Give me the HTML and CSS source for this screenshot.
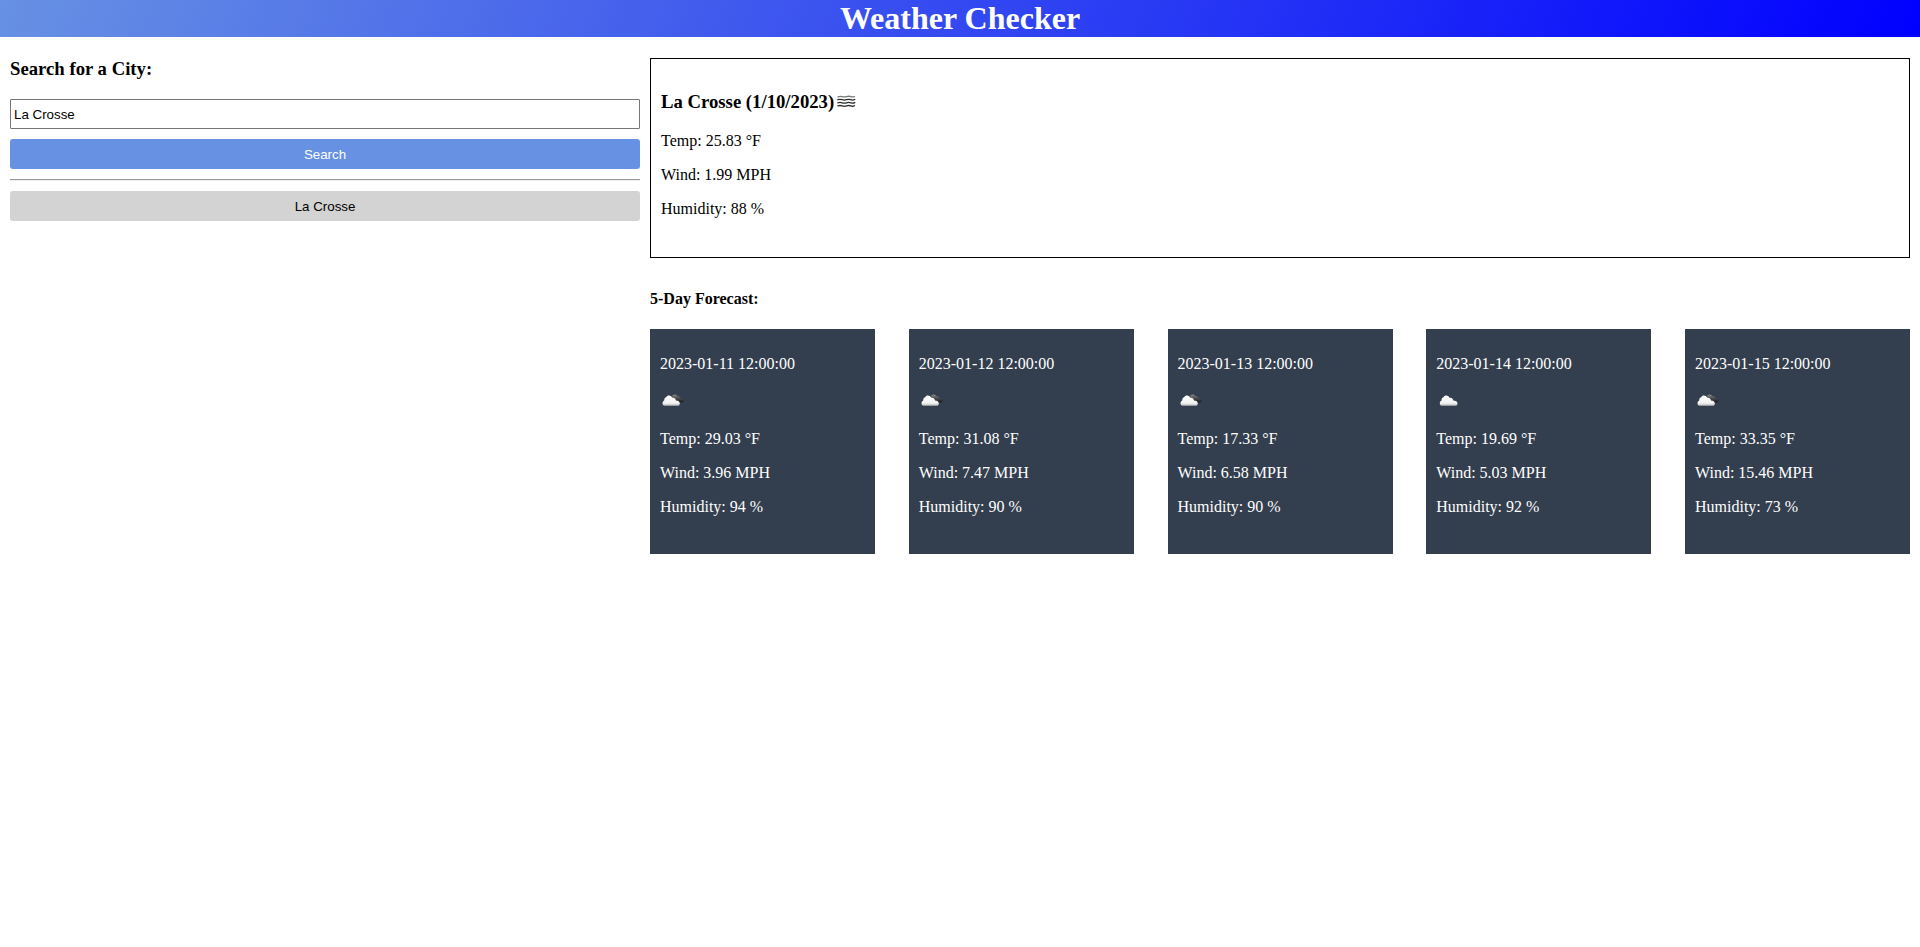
FILE: index.html
```html
<!DOCTYPE html>
<html lang="en">
<head>
  <meta charset="UTF-8">
  <meta name="viewport" content="width=device-width, initial-scale=1">
  <title>Weather Checker</title>
  <link rel="stylesheet" href="styles.css">
</head>
<body>
  <svg class="sprite" aria-hidden="true">
    <defs>
      <linearGradient id="white-cloud" x1="0" y1="0" x2="0" y2="1">
        <stop offset="0" stop-color="#ffffff"/>
        <stop offset="0.75" stop-color="#f2f2f2"/>
        <stop offset="1" stop-color="#b5b5b5"/>
      </linearGradient>
      <linearGradient id="dark-cloud" x1="0" y1="0" x2="0" y2="1">
        <stop offset="0" stop-color="#888888"/>
        <stop offset="0.5" stop-color="#484848"/>
        <stop offset="1" stop-color="#1c1c1c"/>
      </linearGradient>
    </defs>
    <symbol id="cloud" viewBox="0 0 25 25">
      <path fill="url(#white-cloud)" d="M6.500 16.800C4.800 16.800 3.800 15.800 3.800 14.400C3.800 12.800 4.500 11.800 5.500 11.400C5.500 9.200 6.500 8.400 7.500 8.200C8 6.900 9 6.400 10.200 6.400C12 6.400 13 7.400 13.600 8.700C15.600 8.300 17 9.600 17.300 11.500C19.600 11.500 21.500 12.800 21.500 14.500C21.500 16 20.600 16.800 19 16.800Z"/>
    </symbol>
    <symbol id="broken-clouds" viewBox="0 0 25 25">
      <path fill="url(#dark-cloud)" d="M11.500 9C11.500 7 12.800 5.600 14.500 5.600C16 5.600 17 6.300 17.500 7.300C19.200 7 20.600 8 21 9.600C22.600 9.600 24 10.300 24 11.500C24 12.800 22.800 13.400 21 13.400L16.500 13Z"/>
      <path fill="url(#white-cloud)" d="M5.200 16.800C3.500 16.800 2.500 15.800 2.500 14.400C2.500 12.800 3.200 11.800 4.200 11.400C4.200 9.200 5.200 8.400 6.200 8.200C6.700 6.900 7.700 6.400 8.900 6.400C10.700 6.400 11.700 7.400 12.300 8.700C14.300 8.300 15.700 9.600 16 11.500C18.300 11.500 19.800 12.800 19.800 14.500C19.800 16 19 16.800 17.500 16.800Z"/>
    </symbol>
    <symbol id="mist" viewBox="0 0 25 25">
      <g fill="none" stroke="#2c2c2c" stroke-width="1.3" stroke-linecap="round">
        <path stroke="#777" d="M4 6.900Q6 5.900 8 6.600T12.500 6.600T17 6.600T20.500 6.600"/>
        <path d="M3.800 9.700Q6 8.900 8.200 9.700T12.500 9.700T16.800 9.700T20.800 9.500"/>
        <path d="M3.800 12.800Q6 12 8.200 12.800T12.500 12.800T16.800 12.800T20.800 12.600"/>
        <path d="M3.800 15.900Q6 15.100 8.200 15.900T12.500 15.900T16.800 15.900T20.500 15.700"/>
      </g>
    </symbol>
  </svg>

  <header class="header">
    <h1 class="title">Weather Checker</h1>
  </header>

  <main class="layout">
    <aside>
      <form class="search">
        <h3 class="search-title"><label for="city">Search for a City:</label></h3>
        <input class="field" id="city" type="text" value="La Crosse">
        <button class="button primary" type="button">Search</button>
      </form>
      <hr class="divider">
      <button class="button history" type="button">La Crosse</button>
    </aside>

    <div>
      <section class="current">
        <h3 class="city">La Crosse (1/10/2023)<svg class="icon inline-icon" role="img" aria-label="Mist"><use href="#mist"/></svg></h3>
        <p>Temp: 25.83 °F</p>
        <p>Wind: 1.99 MPH</p>
        <p>Humidity: 88 %</p>
      </section>

      <section>
        <h4 class="forecast-title">5-Day Forecast:</h4>
        <div class="forecast">
          <article class="card">
            <p>2023-01-11 12:00:00</p>
            <svg class="icon" role="img" aria-label="Broken clouds"><use href="#broken-clouds"/></svg>
            <p>Temp: 29.03 °F</p>
            <p>Wind: 3.96 MPH</p>
            <p>Humidity: 94 %</p>
          </article>
          <article class="card">
            <p>2023-01-12 12:00:00</p>
            <svg class="icon" role="img" aria-label="Broken clouds"><use href="#broken-clouds"/></svg>
            <p>Temp: 31.08 °F</p>
            <p>Wind: 7.47 MPH</p>
            <p>Humidity: 90 %</p>
          </article>
          <article class="card">
            <p>2023-01-13 12:00:00</p>
            <svg class="icon" role="img" aria-label="Broken clouds"><use href="#broken-clouds"/></svg>
            <p>Temp: 17.33 °F</p>
            <p>Wind: 6.58 MPH</p>
            <p>Humidity: 90 %</p>
          </article>
          <article class="card">
            <p>2023-01-14 12:00:00</p>
            <svg class="icon" role="img" aria-label="Cloudy"><use href="#cloud"/></svg>
            <p>Temp: 19.69 °F</p>
            <p>Wind: 5.03 MPH</p>
            <p>Humidity: 92 %</p>
          </article>
          <article class="card">
            <p>2023-01-15 12:00:00</p>
            <svg class="icon" role="img" aria-label="Broken clouds"><use href="#broken-clouds"/></svg>
            <p>Temp: 33.35 °F</p>
            <p>Wind: 15.46 MPH</p>
            <p>Humidity: 73 %</p>
          </article>
        </div>
      </section>
    </div>
  </main>
</body>
</html>
```
FILE: styles.css
```css
* {
  box-sizing: border-box;
}

body {
  margin: 0;
  background: #fff;
  color: #000;
  font-family: "Liberation Serif", "Times New Roman", serif;
  font-size: 16px;
  line-height: 18px;
}

p {
  margin: 0;
}

.sprite {
  display: block;
  width: 0;
  height: 0;
}

.header {
  background: linear-gradient(110deg, #6791e3, #0000ff);
  color: #fff;
  text-align: center;
}

.title {
  margin: 0;
  font-size: 32px;
  line-height: 37px;
}

.layout {
  display: grid;
  grid-template-columns: 1fr 2fr;
  gap: 10px;
  padding: 21px 10px;
}

.search {
  display: grid;
  gap: 10px;
}

.search-title,
.city {
  margin: 0;
  line-height: 22px;
}

.search-title {
  margin-bottom: 9px;
}

.city {
  margin-bottom: 3px;
}

.field,
.button {
  width: 100%;
  height: 30px;
  font-family: "Liberation Sans", Arial, sans-serif;
}

.field {
  padding: 1px 3px;
  border: 1px solid #767676;
  border-radius: 1px;
  background: #fff;
  color: #000;
}

.button {
  display: block;
  border: 0;
  border-radius: 3px;
  cursor: pointer;
}

.primary {
  background: #6791e3;
  color: #fff;
}

.history {
  background: #d3d3d3;
  color: #000;
}

.divider {
  margin: 10px 0;
  border: 0;
  border-top: 1px solid #9a9a9a;
  border-bottom: 1px solid #eee;
}

.current {
  display: flex;
  flex-direction: column;
  gap: 16px;
  min-height: 200px;
  padding: 32px 10px;
  border: 1px solid #000;
}

.icon {
  display: block;
  width: 25px;
  height: 25px;
}

.inline-icon {
  display: inline-block;
  margin: -4px 0;
  vertical-align: -3px;
}

.forecast-title {
  margin: 32px 0 21px;
  font-size: 16px;
}

.forecast {
  display: flex;
  flex-wrap: wrap;
  justify-content: space-between;
  gap: 10px;
}

.card {
  display: flex;
  flex-direction: column;
  gap: 16px;
  width: 225px;
  min-height: 225px;
  padding: 26px 10px;
  background: #333e4e;
  color: #fff;
}
```
